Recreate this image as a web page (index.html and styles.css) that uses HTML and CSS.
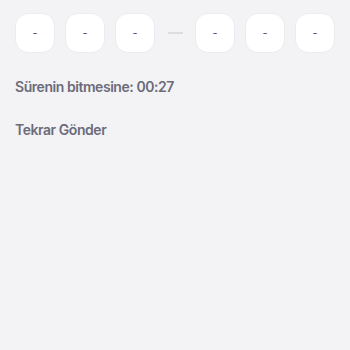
FILE: index.html
```html
<!DOCTYPE html>
<html>
<head>
<meta charset="utf-8">
<link rel="stylesheet" href="styles.css">
</head>
<body>
<div class="page">
  <div class="otp">
    <div class="group">
      <div class="cell">-</div>
      <div class="cell">-</div>
      <div class="cell">-</div>
    </div>
    <div class="sep"></div>
    <div class="group">
      <div class="cell">-</div>
      <div class="cell">-</div>
      <div class="cell">-</div>
    </div>
  </div>
  <p class="timer">Sürenin bitmesine: 00:27</p>
  <p class="resend">Tekrar Gönder</p>
</div>
</body>
</html>
```
FILE: styles.css
```css
html, body {
  margin: 0;
  padding: 0;
  background: #f3f3f6;
  width: 350px;
  height: 350px;
}
.page {
  padding: 13px 15px 0 15px;
  font-family: Inter, "Open Sans", "Liberation Sans", sans-serif;
}
.otp {
  display: flex;
  align-items: center;
}
.group {
  display: flex;
  gap: 10px;
}
.cell {
  width: 40px;
  height: 40px;
  box-sizing: border-box;
  background: #ffffff;
  border: 1px solid #ececf0;
  border-radius: 13px;
  display: flex;
  align-items: center;
  justify-content: center;
  font-size: 11px;
  color: #55555f;
}
.sep {
  width: 15px;
  height: 2px;
  background: #dcdce2;
  margin: 0 12px 0 13px;
}
.timer, .resend {
  font-size: 14px;
  letter-spacing: -0.45px;
  font-weight: 600;
  color: #6c6b7a;
  line-height: 18px;
}
.timer {
  margin: 25px 0 0 0;
}
.resend {
  margin: 25px 0 0 0;
}
```
